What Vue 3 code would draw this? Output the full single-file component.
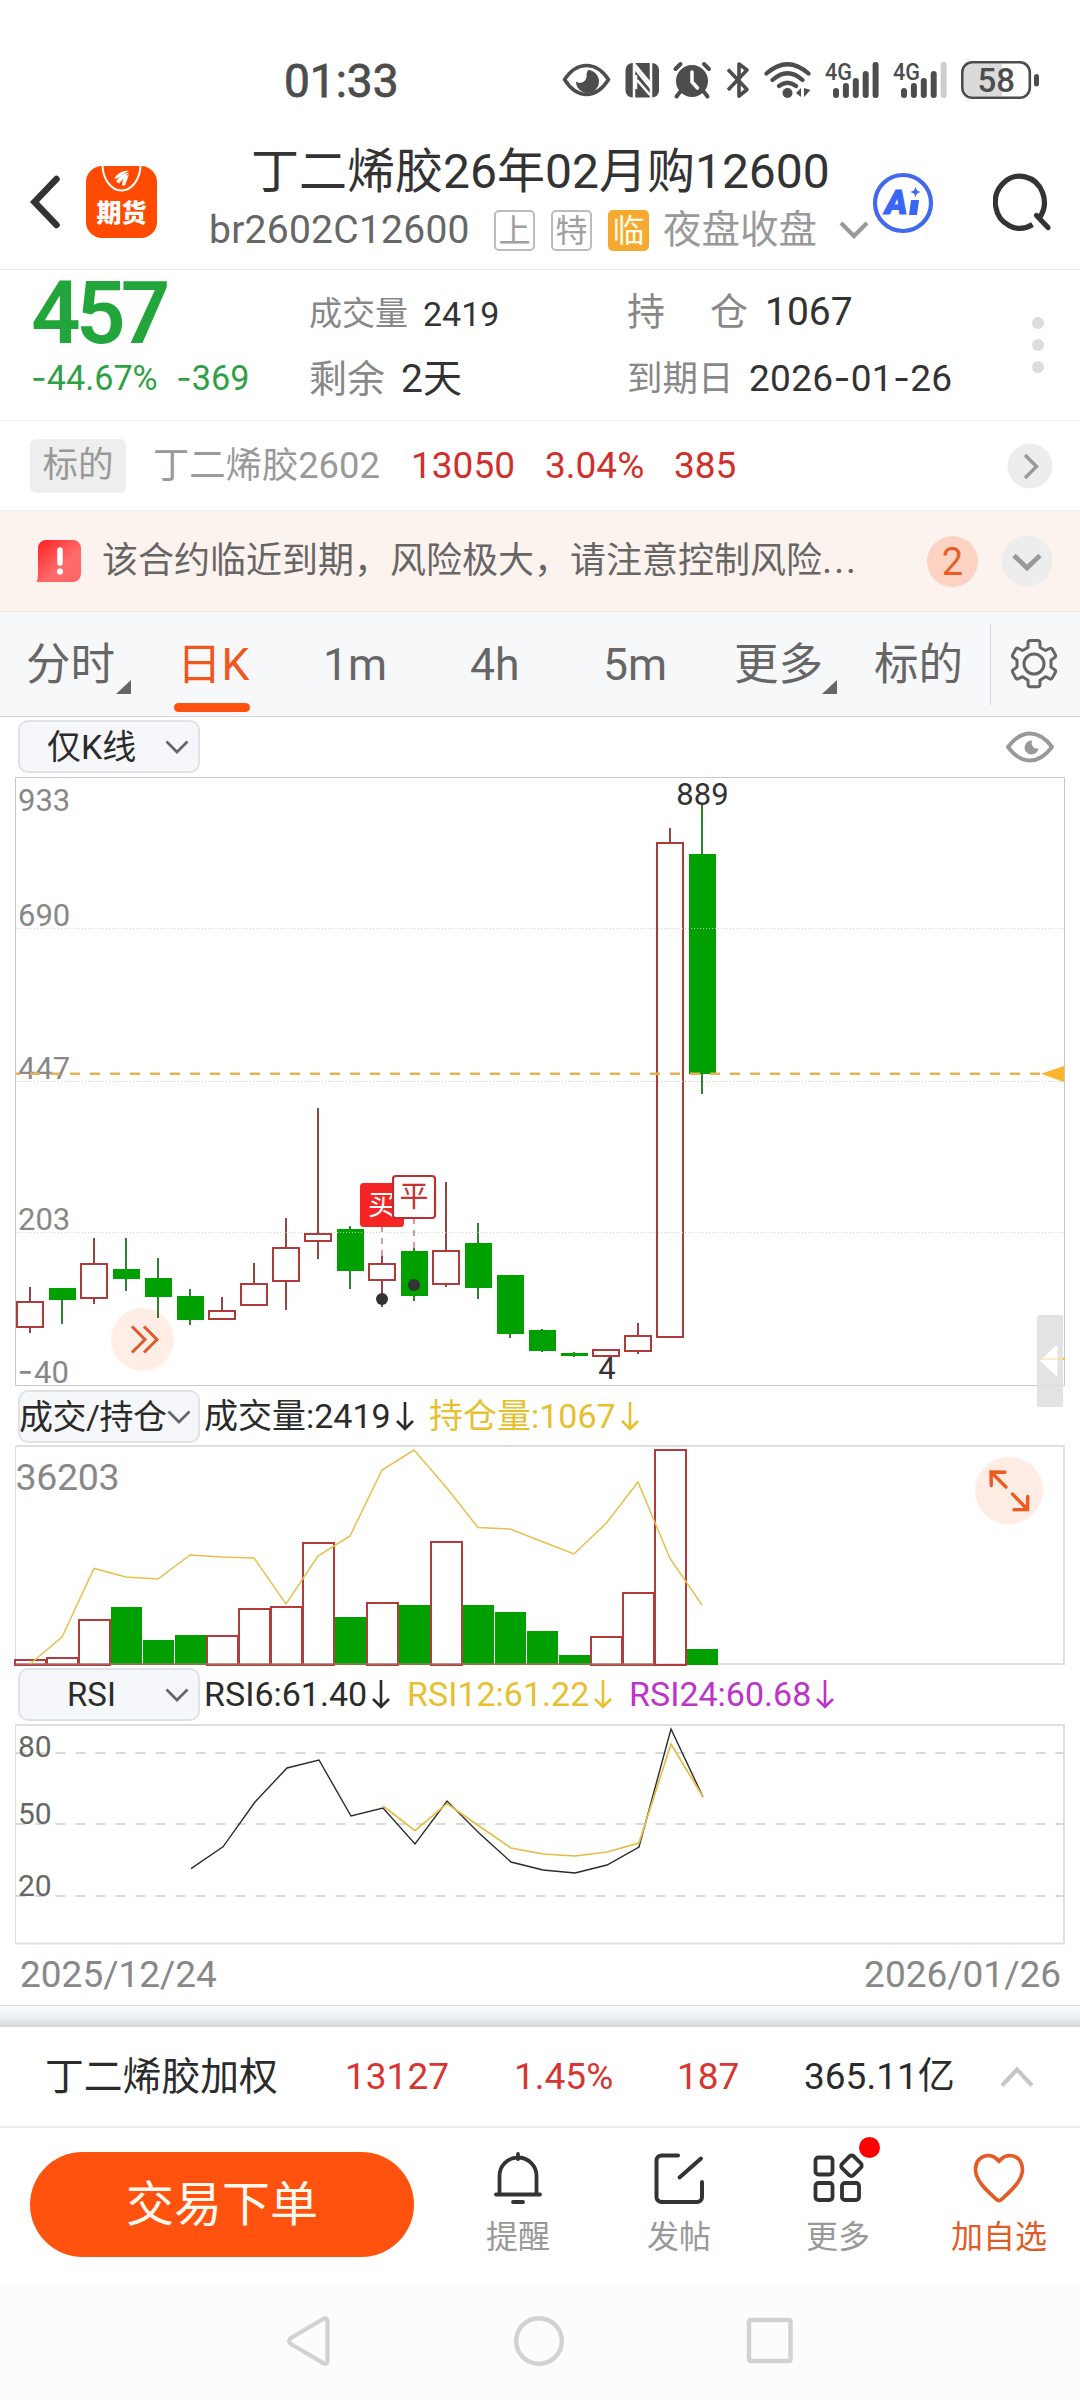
<script setup>
const up = 'up'
const down = 'down'

// Each candle: direction, high, body top, body bottom, low (pixels inside the page-wide plot)
const candles = [
  [up, 1287, 1301, 1328, 1333], [down, 1288, 1288, 1300, 1324], [up, 1238, 1263, 1299, 1304],
  [down, 1238, 1269, 1279, 1291], [down, 1258, 1278, 1297, 1318], [down, 1289, 1296, 1320, 1325],
  [up, 1297, 1310, 1320, 1320], [up, 1263, 1283, 1306, 1306], [up, 1218, 1247, 1282, 1310],
  [up, 1108, 1233, 1242, 1259], [down, 1226, 1229, 1271, 1289], [up, 1256, 1263, 1281, 1307],
  [down, 1248, 1251, 1296, 1301], [up, 1182, 1250, 1285, 1287], [down, 1223, 1243, 1288, 1299],
  [down, 1275, 1275, 1334, 1338], [down, 1329, 1330, 1351, 1352], [down, 1352, 1353, 1356, 1357],
  [up, 1349, 1349, 1357, 1357], [up, 1323, 1335, 1352, 1354], [up, 828, 842, 1338, 1338],
  [down, 804, 854, 1074, 1094],
].map(([dir, high, top, bottom, low], i) => ({ dir, high, top, bottom, low, x: 30 + 32 * i }))

const volumeTops = [1659, 1657, 1619, 1607, 1640, 1635, 1635, 1608, 1606, 1542, 1617, 1602, 1605, 1541, 1605, 1612, 1631, 1655, 1636, 1592, 1449, 1649]
const volumes = volumeTops.map((top, i) => ({ top, dir: i === 1 ? up : candles[i].dir, x: 14 + 32 * i }))

const interest = [1664, 1637, 1568.5, 1577, 1579, 1555, 1557, 1558, 1604, 1556, 1536, 1470, 1450, 1487, 1527.5, 1529, 1541.5, 1554, 1523.5, 1482, 1558.5, 1605]
const rsi6 = [1868.6, 1846.8, 1802, 1768, 1760, 1816, 1808, 1844, 1801, 1833, 1862, 1870, 1873, 1865, 1847, 1729, 1797]
const rsi12 = [1806, 1830.7, 1803.6, 1826, 1848, 1854, 1856, 1852, 1843, 1744, 1797]
const line = (ys, x0) => ys.map((y, i) => `${x0 + 32 * i},${y}`).join(' ')

const signals = [
  { x: 836, lastOff: false },
  { x: 904, lastOff: true },
]
const barTops = [88, 83, 78, 71, 62]
</script>

<template>
  <div class="phone">
    <div class="status">
      <span class="clock">01:33</span>
      <svg class="status-icons" width="482" height="44" viewBox="560 59 482 44">
        <g fill="none" stroke="#4d4d4d" stroke-width="3.6" stroke-linejoin="round">
          <path d="M564.5 79.500Q574 65.500 586.500 65.500T608.500 79.500Q599 94.500 586.500 94.500T564.500 79.500Z" />
        </g>
        <path fill="#4d4d4d" d="M588 70a11.500 11.500 0 1 1-12 11.500c4 3.500 12 0 10.500-7.500z" />
        <rect x="625.500" y="63" width="33.500" height="34.500" rx="7" fill="#4d4d4d" />
        <path d="M634 63v35M651 63v35" stroke="#fff" stroke-width="2.500" />
        <path d="M636 70l14 17v-4l-14-17zM636 75v14M637 80l13 15" stroke="#fff" stroke-width="2.500" fill="none" />
        <g fill="#4d4d4d" stroke="#4d4d4d" stroke-linecap="round">
          <circle cx="692" cy="81" r="16" stroke="none" />
          <path d="M675.500 69l5-5M709 69l-5-5" stroke-width="4" fill="none" />
          <path d="M680 92l-3.500 4.500M704 92l3.500 4.500" stroke-width="4" fill="none" />
        </g>
        <path d="M692 72v10l5.500 6" stroke="#fff" stroke-width="3.500" fill="none" stroke-linecap="round" />
        <path d="M728 69.500L747 89.500 739 96V64l8 6-19 20" stroke="#4d4d4d" stroke-width="3.600" fill="none" stroke-linejoin="round" />
        <g fill="none" stroke="#4d4d4d" stroke-width="4.200" stroke-linecap="round">
          <path d="M766.500 73.500Q787.500 55 808.500 73.500M772.500 80Q787.500 66.500 802.500 80M779 86Q787.500 79.500 796 86" />
        </g>
        <circle cx="787.500" cy="93" r="5" fill="#4d4d4d" />
        <path d="M796 93l5-5v9zM804 97v-9l6.500 2z" fill="#4d4d4d" />
        <g v-for="s in signals" :key="s.x">
          <text :x="s.x - 11" y="80" font-size="23" font-weight="500" fill="#4d4d4d" textLength="27" lengthAdjust="spacingAndGlyphs">4G</text>
          <line v-for="(top, i) in barTops" :key="i" :x1="s.x + 9.900 * i" :x2="s.x + 9.900 * i" :y1="top + 3" y2="95"
            :stroke="s.lastOff && i === 4 ? '#cdcdcd' : '#4d4d4d'" stroke-width="6" stroke-linecap="round" />
        </g>
        <path d="M1002 63.500h-29a10 10 0 0 0-9.500 10v13a10 10 0 0 0 9.500 10h29z" fill="#dadada" />
        <rect x="962.300" y="62.300" width="67.500" height="35.500" rx="10" fill="none" stroke="#4d4d4d" stroke-width="2.600" />
        <rect x="1034" y="74" width="5" height="12.500" rx="2.500" fill="#4d4d4d" />
        <text x="996.300" y="92" text-anchor="middle" font-size="33" font-weight="500" fill="#4d4d4d">58</text>
      </svg>
    </div>

    <header class="header">
      <svg class="back" width="32" height="54" viewBox="0 0 32 54"><path d="M26.500 4L4.500 27l22 23" fill="none" stroke="#333" stroke-width="6.500" stroke-linecap="round" /></svg>
      <div class="logo">
        <svg width="71" height="30" viewBox="0 0 71 30">
          <path d="M16.500-2a19 26 0 0 0 38 0" fill="none" stroke="#fff" stroke-width="2" />
          <path d="M28 12Q33 4 43 4L31 12zM30 15Q34 8 43 6L33 17zM36 19Q36 10 43 8L39 19z" fill="#fff" />
        </svg>
        <span>期货</span>
      </div>
      <div class="titles">
        <div class="title">丁二烯胶26年02月购12600</div>
        <div class="subtitle">
          <span class="code">br2602C12600</span>
          <span class="box">上</span><span class="box">特</span><span class="box hot">临</span>
          <span class="session">夜盘收盘</span>
          <svg class="sub-chev" width="32" height="22" viewBox="0 0 32 22"><path d="M3 4l13 13L29 4" fill="none" stroke="#999" stroke-width="4.200" /></svg>
        </div>
      </div>
      <svg class="ai" width="62" height="62" viewBox="0 0 62 62">
        <circle cx="31" cy="31" r="28" fill="none" stroke="#4169ec" stroke-width="4.200" />
        <text x="13" y="42" font-size="34" font-weight="900" font-style="italic" fill="#3a66f5" stroke="#3a66f5" stroke-width="1.200">A</text>
        <path d="M39 28h8l-2 15h-8z" fill="#3a66f5" />
        <path d="M43.500 15l1.500 3.500 3.500 1.500-3.500 1.500-1.500 3.500-1.500-3.500-3.500-1.500 3.500-1.500z" fill="#3a66f5" />
      </svg>
      <svg class="search" width="60" height="62" viewBox="0 0 60 62">
        <path d="M39.500 53.500A24.500 26 0 1 1 47 46" fill="none" stroke="#333" stroke-width="5.200" />
        <path d="M43.500 44.500L55 56.500" stroke="#333" stroke-width="5.200" stroke-linecap="round" />
      </svg>
    </header>

    <section class="quote">
      <div class="price-col">
        <div class="price">457</div>
        <div class="change"><span><i class="dash">-</i>44.67%</span><span><i class="dash">-</i>369</span></div>
      </div>
      <div class="stat-col first">
        <div class="r1"><span class="lab s33">成交量</span><b class="s34">2419</b></div>
        <div class="r2"><span class="lab s38">剩余</span><b class="s39">2天</b></div>
      </div>
      <div class="stat-col second">
        <div class="r1"><span class="lab s38 spread"><em>持</em><em>仓</em></span><b class="s39">1067</b></div>
        <div class="r2"><span class="lab s36">到期日</span><b class="s37">2026<i class="dash">-</i>01<i class="dash">-</i>26</b></div>
      </div>
      <div class="dots"><i></i><i></i><i></i></div>
    </section>

    <section class="underlying">
      <span class="tag">标的</span>
      <span class="u-name">丁二烯胶2602</span>
      <span class="u-num n1">13050</span><span class="u-num n2">3.04%</span><span class="u-num n3">385</span>
      <svg width="46" height="46" viewBox="0 0 46 46"><circle cx="23" cy="23" r="22.500" fill="#ededed" /><path d="M18 12l11.500 11.500L18 35" fill="none" stroke="#999" stroke-width="3.400" /></svg>
    </section>

    <section class="notice">
      <svg class="alert" width="46" height="44" viewBox="0 0 46 44">
        <defs><linearGradient id="alertFill" x1="0" y1="0" x2="1" y2="1"><stop offset=".1" stop-color="#ff2b2b" /><stop offset=".6" stop-color="#ff6b6b" /><stop offset="1" stop-color="#ff6464" /></linearGradient></defs>
        <path d="M10 1h27a8 8 0 0 1 8 8v26a8 8 0 0 1-8 8H.5Q2 40 2 35V9a8 8 0 0 1 8-8z" fill="url(#alertFill)" />
        <path d="M24 11v13" stroke="#fff" stroke-width="5.500" stroke-linecap="round" /><circle cx="24" cy="32.500" r="3.100" fill="#fff" />
      </svg>
      <span class="n-text">该合约临近到期，风险极大，请注意控制风险<i class="dots3">...</i></span>
      <span class="count">2</span>
      <svg class="n-more" width="52" height="52" viewBox="0 0 52 52"><circle cx="26" cy="26" r="25.500" fill="#ededed" /><path d="M13 20.500l13 12.500 13-12.500" fill="none" stroke="#999" stroke-width="4.800" /></svg>
    </section>

    <nav class="tabs">
      <span class="t1">分时<i class="tri"></i></span>
      <span class="t2 active">日K</span>
      <span class="t3">1m</span>
      <span class="t4">4h</span>
      <span class="t5">5m</span>
      <span class="t6">更多<i class="tri"></i></span>
      <span class="t7">标的</span>
      <i class="sep"></i>
      <svg class="gear" width="48" height="52" viewBox="0 0 48 52">
        <g fill="none" stroke="#666" stroke-width="3" stroke-linejoin="round">
          <path d="M18 5q0-2.500 2.500-2.500h7q2.500 0 2.500 2.500v4.500l5.500 3 4-2q1.800-1 2.800.8l3 5.500q1 1.800-.8 2.800l-3.500 2.500v7l3.500 2.500q1.800 1 .8 2.800l-3 5.500q-1 1.800-2.800.8l-4-2-5.500 3.500v4q0 2.500-2.500 2.500h-7q-2.500 0-2.500-2.500v-4l-5.500-3.500-4 2q-1.800 1-2.800-.8l-3-5.500q-1-1.800.8-2.800l3.500-2.500v-7l-3.500-2.500q-1.800-1-.8-2.800l3-5.500q1-1.800 2.800-.8l4 2 5.500-3z" />
          <circle cx="24" cy="26" r="10" />
        </g>
      </svg>
    </nav>

    <div class="toolbar main-tools">
      <span class="select"><em>仅K线</em><svg width="24" height="14" viewBox="0 0 24 14"><path d="M1.500 1.500L12 12 22.500 1.500" fill="none" stroke="#666" stroke-width="2.800" /></svg></span>
      <svg class="eye" width="50" height="32" viewBox="0 0 50 32">
        <path d="M3 16Q13 2.500 25 2.500T47 16Q37 29.500 25 29.500T3 16Z" fill="none" stroke="#999" stroke-width="3.800" stroke-linejoin="round" />
        <path d="M27 9.500a7 7 0 1 0 6.500 7.500c-3.500 2-8-2-6.500-7.500z" fill="#999" />
      </svg>
    </div>

    <svg class="plot" width="1080" height="612" viewBox="0 776 1080 612">
      <g fill="none" stroke="#c9c9c9">
        <path d="M15.500 777.500H1064.500V1385.500H15.500z" />
      </g>
      <g fill="#888" font-size="31">
        <text x="18" y="811">933</text><text x="18" y="926">690</text><text x="18" y="1079">447</text><text x="18" y="1230">203</text>
        <text x="17.500" y="1383"><tspan class="inter" font-size="34">-</tspan><tspan x="34">40</tspan></text>
      </g>
      <g v-for="c in candles" :key="c.x">
        <template v-if="c.dir === up">
          <path :d="`M${c.x} ${c.high}V${c.top}M${c.x} ${c.bottom}V${c.low}`" stroke="#934743" stroke-width="2" />
          <rect :x="c.x - 13" :y="c.top + 1" width="26" :height="c.bottom - c.top - 2" fill="none" stroke="#ae3b3a" stroke-width="2" />
        </template>
        <template v-else>
          <path :d="`M${c.x} ${c.high}V${c.low}`" stroke="#2c832c" stroke-width="2" />
          <rect :x="c.x - 13" :y="c.top" width="27" :height="c.bottom - c.top" fill="#00a000" />
        </template>
      </g>
      <path d="M16 928.500H1064M16 1081.500H1064M16 1232.500H1064" stroke="#d0d0d0" stroke-dasharray="1 2" />
      <path d="M16 1073.700H1041" stroke="#e6b352" stroke-width="2.600" stroke-dasharray="10 10" stroke-dashoffset="6" />
      <path d="M1041 1073.700L1064 1066v16z" fill="#ffb42d" />
      <g fill="#333" font-size="31">
        <text x="702.500" y="805" text-anchor="middle">889</text>
        <text x="607" y="1379" text-anchor="middle">4</text>
      </g>
      <path d="M382 1227v29M414 1219v29" stroke="#d99c9a" stroke-width="2" stroke-dasharray="6 6" stroke-dashoffset="1" />
      <rect x="360" y="1183" width="44" height="44" rx="3.500" fill="#f52425" />
      <text x="382" y="1215" text-anchor="middle" font-size="28" fill="#fff">买</text>
      <rect x="393" y="1176" width="42" height="42" rx="3" fill="#fff" stroke="#b8302f" stroke-width="2.200" />
      <text x="414" y="1207" text-anchor="middle" font-size="29" fill="#c93331">平</text>
      <circle cx="382" cy="1299" r="6" fill="#333" /><circle cx="414" cy="1285" r="6" fill="#333" />
      <circle cx="142.500" cy="1339.500" r="31.500" fill="#ff4a0a" fill-opacity=".1" />
      <path d="M132 1326.500l13 13-13 13M144 1326.500l13 13-13 13" fill="none" stroke="#e05a2b" stroke-width="3" />
    </svg>

    <div class="toolbar vol-tools">
      <span class="select tight"><em>成交/持仓</em><svg width="24" height="14" viewBox="0 0 24 14"><path d="M1.500 1.500L12 12 22.500 1.500" fill="none" stroke="#666" stroke-width="2.800" /></svg></span>
      <span class="ind dark v1">成交量:2419<svg width="20" height="30" viewBox="0 0 20 30"><path d="M10 1v27M2 20l8 8 8-8" fill="none" stroke="currentColor" stroke-width="2.600" /></svg></span>
      <span class="ind gold v2">持仓量:1067<svg width="20" height="30" viewBox="0 0 20 30"><path d="M10 1v27M2 20l8 8 8-8" fill="none" stroke="currentColor" stroke-width="2.600" /></svg></span>
      <svg class="drawer" width="28" height="92" viewBox="0 0 28 92">
        <rect width="26" height="92" rx="2.500" fill="#dedede" fill-opacity=".85" />
        <path d="M4 44h24" stroke="#f6dcae" stroke-width="2" /><path d="M26 44h2" stroke="#ffb42d" stroke-width="2" />
        <path d="M3 46l16-15.500q1.500-.5 1.500 1V60q0 1.500-1.500.5z" fill="#fff" />
        <path d="M4 44h16" stroke="#fbeacb" stroke-width="2" />
      </svg>
    </div>

    <svg class="plot" width="1080" height="222" viewBox="0 1444 1080 222">
      <path d="M15.500 1446H1064V1664H15.500" fill="none" stroke="#dfdfdf" stroke-width="2" /><path d="M15.500 1446v218" stroke="#ddd" />
      <text x="15.500" y="1490" font-size="37.500" fill="#888" textLength="104">36203</text>
      <template v-for="v in volumes" :key="v.x">
        <rect v-if="v.dir === up" :x="v.x + 1" :y="v.top + 1" width="31" :height="1664 - v.top" fill="none" stroke="#b43b3b" stroke-width="2" />
        <rect v-else :x="v.x + 1" :y="v.top" width="31" :height="1665 - v.top" fill="#00a000" />
      </template>
      <path d="M15.500 1664H654" stroke="#a9706b" stroke-width="2" stroke-opacity=".7" />
      <polyline :points="line(interest, 30)" fill="none" stroke="#e7c04c" stroke-width="1.500" />
      <ellipse cx="1009" cy="1490.500" rx="34" ry="33.800" fill="#feece5" />
      <g fill="none" stroke="#f0591f" stroke-width="3.400" stroke-linecap="round">
        <path d="M1005 1472.300l-14-.3.300 13.500M991.500 1472.500L1006 1487M1012.500 1494l15 15.500M1027.700 1496.500l-.2 13-13.500.2" />
      </g>
    </svg>

    <div class="toolbar rsi-tools">
      <span class="select mid"><em>RSI</em><svg width="24" height="14" viewBox="0 0 24 14"><path d="M1.500 1.500L12 12 22.500 1.500" fill="none" stroke="#666" stroke-width="2.800" /></svg></span>
      <span class="ind dark q1">RSI6:61.40<svg width="20" height="30" viewBox="0 0 20 30"><path d="M10 1v27M2 20l8 8 8-8" fill="none" stroke="currentColor" stroke-width="2.600" /></svg></span>
      <span class="ind gold q2">RSI12:61.22<svg width="20" height="30" viewBox="0 0 20 30"><path d="M10 1v27M2 20l8 8 8-8" fill="none" stroke="currentColor" stroke-width="2.600" /></svg></span>
      <span class="ind purple q3">RSI24:60.68<svg width="20" height="30" viewBox="0 0 20 30"><path d="M10 1v27M2 20l8 8 8-8" fill="none" stroke="currentColor" stroke-width="2.600" /></svg></span>
    </div>

    <svg class="plot" width="1080" height="222" viewBox="0 1724 1080 222">
      <path d="M15.500 1725H1064V1943.500H15.500" fill="none" stroke="#dfdfdf" stroke-width="2" /><path d="M15.500 1725v218" stroke="#ddd" />
      <path d="M15.500 1753H1064M15.500 1824H1064M15.500 1896H1064" stroke="#d9d9d9" stroke-width="2" stroke-dasharray="10 10" />
      <g font-size="30" fill="#666"><text x="18" y="1757">80</text><text x="18" y="1824">50</text><text x="18" y="1896">20</text></g>
      <polyline :points="line(rsi6, 191)" fill="none" stroke="#2b2b2b" stroke-width="1.400" />
      <polyline :points="line(rsi12, 383)" fill="none" stroke="#e5bd45" stroke-width="1.700" />
    </svg>

    <div class="dates"><span>2025/12/24</span><span>2026/01/26</span></div>
    <div class="shade"></div>

    <section class="index">
      <span class="i-name">丁二烯胶加权</span>
      <span class="i-a red">13127</span><span class="i-b red">1.45%</span><span class="i-c red">187</span><span class="i-d">365.11亿</span>
      <svg width="36" height="24" viewBox="0 0 36 24"><path d="M3 20.500l15-16 15 16" fill="none" stroke="#c6c6c6" stroke-width="4.200" /></svg>
    </section>

    <footer class="actions">
      <button class="trade">交易下单</button>
      <div class="act a1">
        <svg width="60" height="56" viewBox="0 0 60 56" fill="none" stroke="#333" stroke-width="3.800" stroke-linecap="round"><path d="M30 4v5M11.500 44V26a18.500 18.500 0 0 1 37 0v18M8 44.500h44" /><path d="M25 52h10" /></svg>
        <span>提醒</span>
      </div>
      <div class="act a2">
        <svg width="60" height="56" viewBox="0 0 60 56" fill="none" stroke="#333" stroke-width="4" stroke-linecap="round"><path d="M29 5.500H12.500a5 5 0 0 0-5 5V47a5 5 0 0 0 5 5H48a5 5 0 0 0 5-5V32M30.500 27.500L52 8.500" /></svg>
        <span>发帖</span>
      </div>
      <div class="act a3">
        <svg width="60" height="56" viewBox="0 0 60 56" fill="none" stroke="#333" stroke-width="3.800" stroke-linejoin="round"><rect x="7.500" y="7.500" width="17" height="17" rx="3" /><rect x="7.500" y="33" width="17" height="17" rx="3" /><rect x="34" y="33" width="17" height="17" rx="3" /><rect x="35.500" y="7.500" width="16" height="16.500" rx="3" transform="rotate(45 43.500 15.700)" /></svg>
        <span>更多</span><i class="badge"></i>
      </div>
      <div class="act a4 on">
        <svg width="60" height="56" viewBox="0 0 60 56" fill="none" stroke="#e35c25" stroke-width="3.700" stroke-linejoin="round"><path d="M30 11.500C26 6 21 5 17 5.800C10 7 6.500 13 6.500 19.500C6.500 30 16 39 27.500 49.500Q30 51.500 32.500 49.500C44 39 53.500 30 53.500 19.500C53.500 13 50 7 43 5.800C39 5 34 6 30 11.500Z" /></svg>
        <span>加自选</span>
      </div>
    </footer>

    <div class="sysnav">
      <svg width="46" height="54" viewBox="0 0 46 54"><path d="M5 24L38 4.500q3.500-1 3.500 2.500v40q0 3.500-3.500 2.500L5 30q-4-3 0-6z" fill="none" stroke="#d2d2d2" stroke-width="4.200" /></svg>
      <svg width="54" height="54" viewBox="0 0 54 54"><circle cx="27" cy="27" r="22.800" fill="none" stroke="#d2d2d2" stroke-width="4.400" /></svg>
      <svg width="48" height="48" viewBox="0 0 48 48"><rect x="3" y="3" width="41.500" height="41" rx="1.500" fill="none" stroke="#d2d2d2" stroke-width="4.400" /></svg>
    </div>
  </div>
</template>

<style>
body { margin: 0; background: #fff; }
</style>

<style scoped>
.phone { width: 1080px; height: 2400px; overflow: hidden; display: flex; flex-direction: column; background: #fff; font-family: Roboto, "Noto Sans CJK SC", sans-serif; color: #333; }
.phone > * { flex: none; box-sizing: border-box; }
.phone i, .phone em { font-style: normal; }
svg { display: block; flex: none; }
span { white-space: nowrap; flex: none; }
.dash, .inter { font-family: Inter, sans-serif; }

.status { height: 110px; padding: 51px 0 0 284px; display: flex; align-items: center; }
.clock { width: 276px; height: 59px; line-height: 60px; font-size: 46px; font-weight: 400; -webkit-text-stroke: .8px #4d4d4d; color: #4d4d4d; align-self: flex-start; }
.status-icons { align-self: flex-start; margin-top: 8px; }

.header { height: 160px; padding: 25px 0 0 30px; display: flex; align-items: center; border-bottom: 1px solid #ebebeb; }
.logo { width: 71px; height: 72px; margin: 0 53px 0 24px; border-radius: 16px; overflow: hidden; background: #ff4a02; color: #fff; display: flex; flex-direction: column; }
.logo span { font-size: 25px; font-weight: 900; line-height: 34px; text-align: center; }
.logo svg { height: 31px; }
.titles { width: 661px; align-self: flex-start; margin-top: 6px; }
.title { margin-left: 41px; line-height: 62px; height: 60px; font-size: 48px; white-space: nowrap; }
.subtitle { display: flex; align-items: center; height: 40px; margin-top: 9px; line-height: 42px; }
.code { width: 284px; font-size: 39px; letter-spacing: .25px; color: #666; margin-left: -1px; margin-right: 1px; }
.box { box-sizing: border-box; width: 41px; height: 41px; line-height: 38px; margin-right: 16px; border: 2px solid #bcbcbc; border-radius: 5px; font-size: 32px; text-align: center; color: #a0a0a0; display: flex; justify-content: center; }
.box.hot { border-color: #f5a92f; background: #f5a92f; color: #fffbe8; margin-right: 14px; }
.session { width: 175px; font-size: 38.500px; color: #999; }
.ai { margin-left: 1px; margin-top: 2px; }
.search { margin-left: 59px; }

.quote { height: 151px; display: flex; padding-left: 31px; border-bottom: 1px solid #f2f2f2; }
.price-col { width: 278px; }
.price { height: 86px; line-height: 87px; font-size: 87px; font-weight: 600; letter-spacing: -4.800px; color: #22a63c; }
.change { height: 44px; line-height: 44px; display: flex; font-size: 34.200px; color: #30a046; }
.change span:first-child { width: 145px; }
.first { width: 318px; }
.second { width: 405px; }
.r1, .r2 { display: flex; align-items: center; line-height: 44px; }
.r1 { height: 87px; }
.r2 { height: 43px; }
.stat-col b { font-weight: 400; color: #333; }
.lab { color: #888; }
.first .r1 .lab { width: 114px; }
.first .r2 .lab { width: 92px; }
.second .r1 .lab { width: 138px; }
.second .r2 .lab { width: 122px; }
.second .r1 { height: 84px; margin-bottom: 3px; }
.spread em:last-child { margin-left: 45px; }
.s33 { font-size: 33px; } .s34 { font-size: 34px; } .s36 { font-size: 35.500px; } .s37 { font-size: 37px; letter-spacing: .3px; } .s38 { font-size: 38px; } .s39 { font-size: 39px; }
.dots { display: flex; flex-direction: column; gap: 10px; padding-top: 47px; }
.dots i { width: 12px; height: 12px; border-radius: 50%; background: #ddd; }

.underlying { height: 90px; padding-left: 30px; display: flex; align-items: center; border-bottom: 1px solid #ebebeb; line-height: 44px; }
.tag { width: 96px; height: 54px; line-height: 53px; text-align: center; border-radius: 6px; background: #eee; color: #999; font-size: 35.500px; margin-right: 27px; }
.u-name { width: 258px; font-size: 36.300px; color: #999; }
.u-num { font-size: 37px; color: #d0302c; }
.n1 { width: 134px; } .n2 { width: 129px; } .n3 { width: 333px; }

.notice { height: 101px; padding-left: 36px; display: flex; align-items: center; background: #fdf3ee; border-bottom: 1px solid #ebebeb; }
.n-text { margin-left: 20px; width: 825px; font-size: 36px; line-height: 46px; color: #666; }
.dots3 { letter-spacing: 1.600px; font-size: 39px; line-height: 1; }
.count { width: 51px; height: 51px; line-height: 52px; border-radius: 50%; text-align: center; background: #fcd3c2; color: #e95d25; font-size: 38px; }
.n-more { margin-left: 23px; }

.tabs { height: 105px; display: flex; padding-left: 26px; background: #f7f8fa; border-bottom: 1px solid #d2d4d8; font-size: 44.500px; line-height: 107px; color: #666; }
.tabs span { display: block; position: relative; height: 104px; }
.t1 { width: 151px; } .t2 { width: 146px; } .t3 { width: 147px; } .t4 { width: 133px; } .t5 { width: 131px; } .t6 { width: 140px; } .t7 { width: 116px; }
.tri { position: absolute; left: 90px; top: 68px; border-style: solid; border-width: 0 0 14px 15px; border-color: transparent transparent #666; }
.t6 .tri { left: 88px; }
.active { color: #f0571f; }
.active::after { content: ""; position: absolute; left: -3px; bottom: 4px; width: 76px; height: 9px; border-radius: 5px; background: #ff5210; }
.sep { width: 1px; height: 81px; margin-top: 12px; background: #d5d7da; }
.gear { margin: 26px 0 0 19px; }

.toolbar { display: flex; padding-left: 18px; }
.main-tools { height: 59px; padding-top: 3px; }
.vol-tools { height: 56px; padding-top: 2px; }
.rsi-tools { height: 58px; padding-top: 2px; }
.select { box-sizing: border-box; width: 182px; height: 53px; border: 2px solid #e0e2e7; border-radius: 10px; background: #f6f7fa; display: flex; align-items: center; justify-content: space-between; padding: 0 9px 0 27px; font-size: 34px; color: #2b2b2b; line-height: 48px; }
.tight { padding-left: 0; }
.tight em { letter-spacing: -.5px; margin-left: -1px; }
.mid { padding-left: 47px; }
.mid em { font-size: 33px; }
.eye { margin: 11px 0 0 805px; }
.plot { overflow: visible; }
.ind { display: flex; align-items: center; font-size: 34px; line-height: 52px; height: 51px; }
.ind svg { margin-left: 4px; }
.dark { color: #2b2b2b; } .gold { color: #e6c02f; } .purple { color: #bd34c9; }
.v1 { margin-left: 4px; width: 225px; } .v2 { width: 608px; }
.drawer { margin-top: -75px; position: relative; }
.q1 { margin-left: 4px; width: 203px; } .q2 { width: 222px; }
.rsi-tools .ind { line-height: 53px; height: 52px; }

.dates { height: 59px; padding: 0 19px 0 20px; display: flex; justify-content: space-between; font-size: 37px; line-height: 57px; color: #888; }
.shade { height: 22px; border-top: 1px solid #ddd; background: linear-gradient(#f7f9fb 10%, #eceef1 60%, #d4d6d9); }
.index { height: 101px; padding-left: 45px; display: flex; align-items: center; border-bottom: 2px solid #ebebeb; font-size: 37px; line-height: 46px; color: #2b2b2b; }
.index span { padding-top: 1px; }
.i-name { width: 300px; font-size: 38.800px; }
.i-a { width: 169px; } .i-b { width: 163px; } .i-c { width: 127px; } .i-d { width: 195px; }
.red { color: #d63633; }

.actions { height: 154px; padding: 24px 0 0 30px; display: flex; align-items: flex-start; }
.trade { width: 384px; height: 105px; padding: 0; border: 0; border-radius: 53px; background: #ff520f; color: #fff9f0; font: 48px/105px Roboto, "Noto Sans CJK SC", sans-serif; }
.act { position: relative; width: 120px; display: flex; flex-direction: column; align-items: center; font-size: 32px; color: #999; }
.act span { line-height: 40px; margin-top: 11px; }
.act svg { margin-top: -2px; }
.a1 { margin-left: 44px; } .a2 { margin-left: 41px; } .a3 { margin-left: 39px; } .a4 { margin-left: 41px; }
.on { color: #df5c28; }
.badge { position: absolute; left: 81px; top: -15px; width: 21px; height: 21px; border-radius: 50%; background: #f00; }

.sysnav { height: 118px; background: #fcfcfc; padding: 0 286px 0 286px; display: flex; align-items: center; justify-content: space-between; }
</style>
